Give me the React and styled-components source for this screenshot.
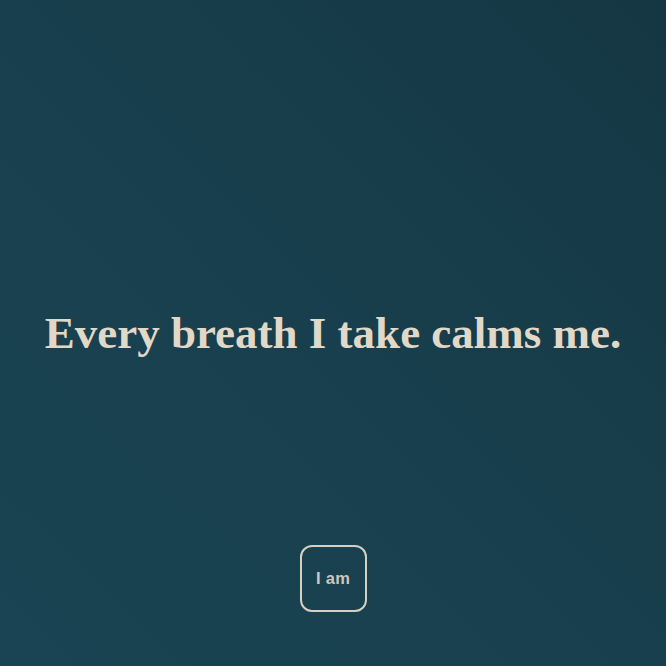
import React from "react";
import styled, { createGlobalStyle } from "styled-components";

const GlobalStyle = createGlobalStyle`
  html, body {
    margin: 0;
    padding: 0;
    height: 100%;
  }
  body {
    background: #183e4c;
  }
  #root {
    height: 100%;
  }
`;

const Page = styled.main`
  box-sizing: border-box;
  height: 100vh;
  display: grid;
  grid-template-rows: 1fr auto 1fr;
  justify-items: center;
  background: linear-gradient(225deg, #153744 0%, #183f4d 50%, #1a4453 100%);
`;

const Affirmation = styled.h1`
  grid-row: 2;
  margin: 0;
  font-family: "Liberation Serif", "Times New Roman", serif;
  font-weight: 700;
  font-size: 45px;
  line-height: 1;
  color: #e1d8c8;
  text-align: center;
`;

const Footer = styled.div`
  grid-row: 3;
  align-self: end;
  padding-bottom: 54px;
`;

const PromptButton = styled.button`
  box-sizing: border-box;
  width: 67px;
  height: 67px;
  display: flex;
  align-items: center;
  justify-content: center;
  padding: 0;
  border: 2px solid #d6cfc2;
  border-radius: 12px;
  background: transparent;
  color: #cfc8bc;
  font-family: "Liberation Sans", Arial, sans-serif;
  font-weight: 700;
  font-size: 16.5px;
  letter-spacing: 0.3px;
  cursor: pointer;
`;

export default function App() {
  return (
    <>
      <GlobalStyle />
      <Page>
        <Affirmation>Every breath I take calms me.</Affirmation>
        <Footer>
          <PromptButton type="button">I am</PromptButton>
        </Footer>
      </Page>
    </>
  );
}
